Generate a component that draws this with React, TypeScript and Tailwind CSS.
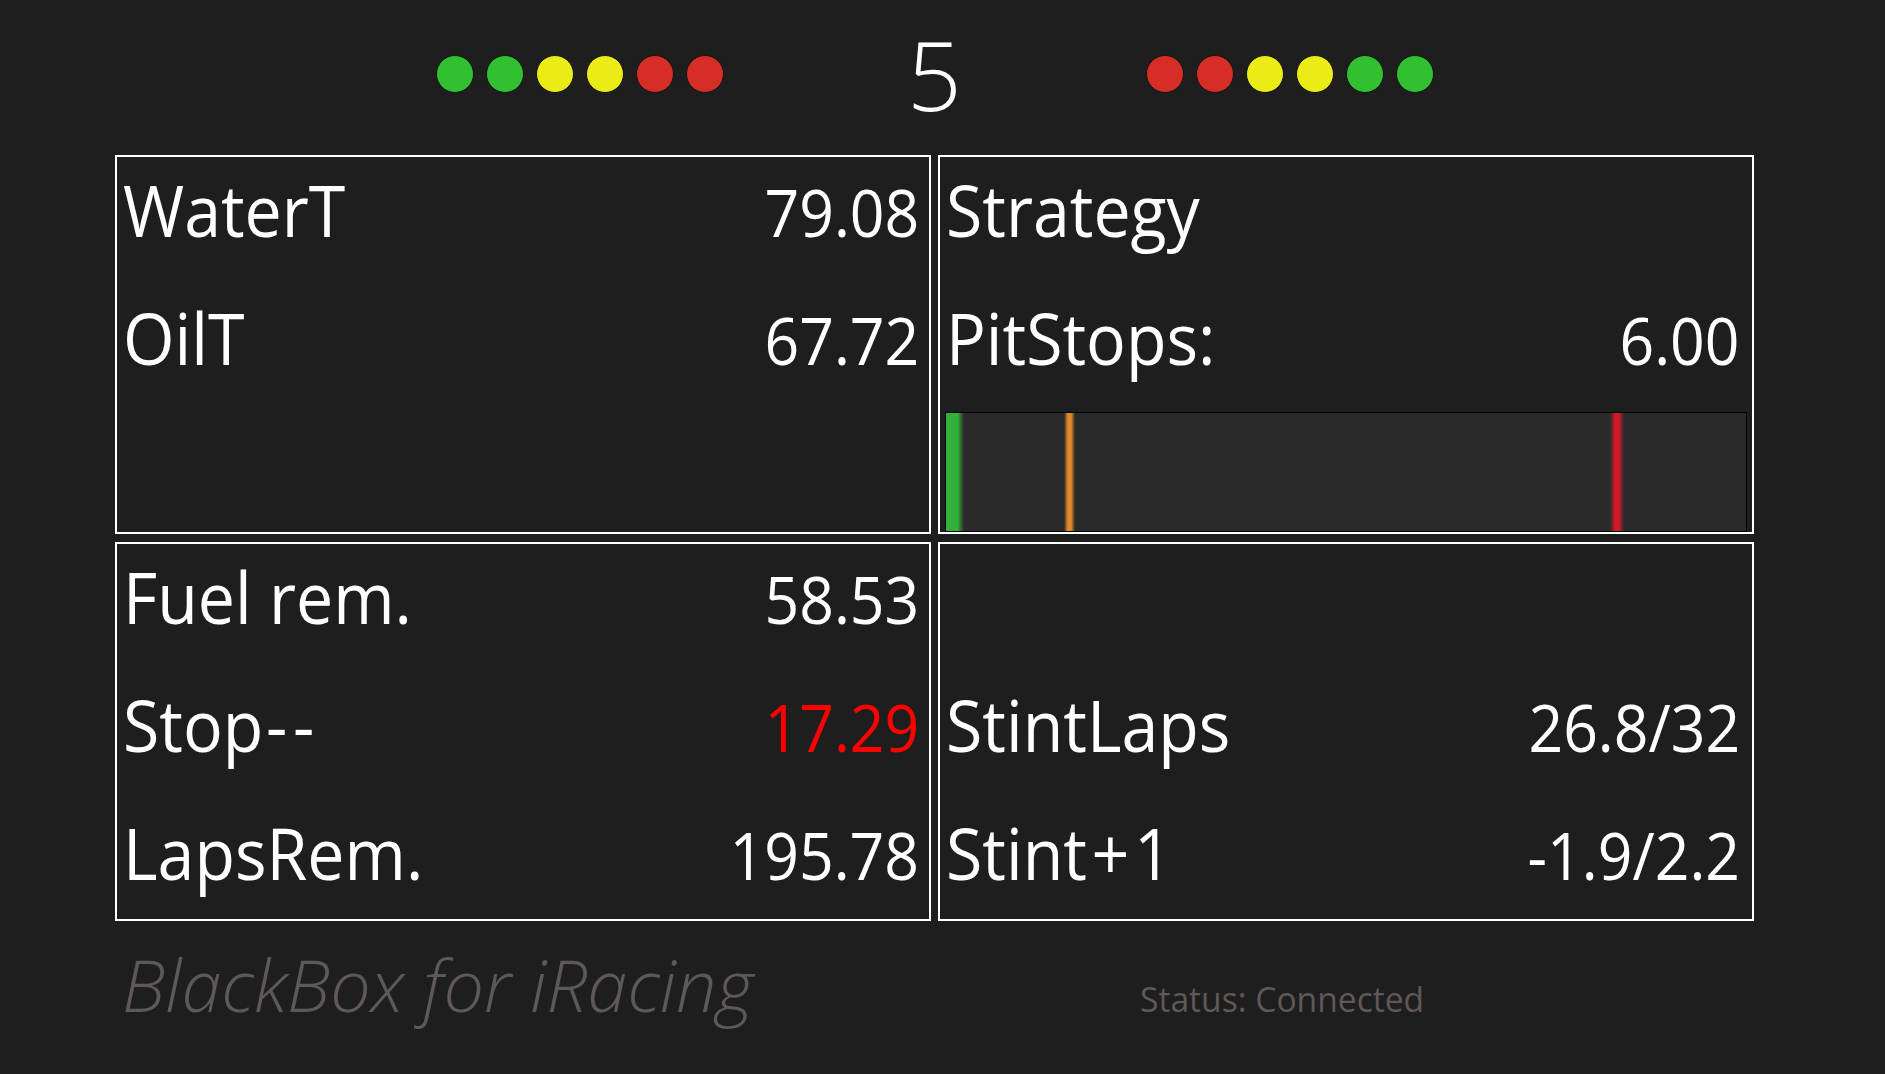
import React from "react";

const font = { fontFamily: '"Open Sans", "Noto Sans", "Liberation Sans", sans-serif' };

function Light({ color }: { color: "g" | "y" | "r" }) {
  const cls =
    color === "g"
      ? "bg-[#30c030]"
      : color === "y"
      ? "bg-[#ebeb17]"
      : "bg-[#d62d26]";
  return <div className={`h-[38px] w-[38px] rounded-full border border-[#141414] ${cls}`} />;
}

function Row({
  label,
  value,
  valueClass = "text-white",
  labelSize = "text-[72px]",
  pr = "pr-[10px]",
}: {
  label?: React.ReactNode;
  value?: string;
  valueClass?: string;
  labelSize?: string;
  pr?: string;
}) {
  return (
    <div className={`flex h-[104px] items-baseline justify-between pl-[6px] ${pr} leading-[104px]`}>
      <span className={`${labelSize} origin-left scale-x-[0.92] whitespace-nowrap text-white`}>
        {label ?? "\u00a0"}
      </span>
      <span className={`origin-right scale-x-[0.92] whitespace-nowrap text-[66px] ${valueClass}`}>
        {value ?? ""}
      </span>
    </div>
  );
}

function Panel({ children }: { children: React.ReactNode }) {
  return (
    <div className="flex h-[379px] flex-col gap-[24px] overflow-hidden border-2 border-white">
      {children}
    </div>
  );
}

export default function App() {
  return (
    <div className="min-h-[1074px] w-full bg-[#1e1e1e]" style={font}>
      <div className="ml-[115px] w-[1639px]">
        <div className="flex h-[155px] items-center justify-center pb-[7px]">
          <div className="flex gap-[12px]">
            <Light color="g" />
            <Light color="g" />
            <Light color="y" />
            <Light color="y" />
            <Light color="r" />
            <Light color="r" />
          </div>
          <div className="w-[422px] text-center text-[96px] font-light leading-[96px] text-white">5</div>
          <div className="flex gap-[12px]">
            <Light color="r" />
            <Light color="r" />
            <Light color="y" />
            <Light color="y" />
            <Light color="g" />
            <Light color="g" />
          </div>
        </div>

        <div className="grid grid-cols-2 gap-x-[7px] gap-y-[8px]">
          <Panel>
            <Row label="WaterT" value="79.08" />
            <Row label="OilT" value="67.72" />
          </Panel>
          <div className="flex h-[379px] flex-col overflow-hidden border-2 border-white">
            <div className="flex flex-col gap-[24px]">
              <Row label="Strategy" pr="pr-[12px]" />
              <Row label="PitStops:" value="6.00" pr="pr-[12px]" />
            </div>
            <div className="relative mx-[5px] mt-[23px] flex-1 border border-black bg-[#2a2a2a]">
              <div className="absolute inset-y-0 left-0 w-[18px] bg-[linear-gradient(to_right,#33b03a_0%,#33b03a_65%,rgba(51,176,58,0)_100%)]" />
              <div className="absolute inset-y-0 left-[14.8%] w-[11px] bg-[linear-gradient(to_right,rgba(224,138,42,0)_0%,#e08a2a_35%,#e08a2a_65%,rgba(224,138,42,0)_100%)]" />
              <div className="absolute inset-y-0 left-[83%] w-[14px] bg-[linear-gradient(to_right,rgba(208,26,42,0)_0%,#cf1a2b_35%,#cf1a2b_65%,rgba(208,26,42,0)_100%)]" />
            </div>
          </div>
          <Panel>
            <Row label="Fuel rem." value="58.53" />
            <Row
              label={
                <>
                  Stop<span className="pl-[3px] tracking-[6px]">--</span>
                </>
              }
              value="17.29"
              valueClass="text-[#ff0000]"
            />
            <Row label="LapsRem." value="195.78" />
          </Panel>
          <Panel>
            <Row pr="pr-[12px]" />
            <Row label="StintLaps" value="26.8/32" pr="pr-[12px]" />
            <Row
              label={
                <>
                  Stint<span className="px-[5px]">+</span>1
                </>
              }
              value="-1.9/2.2"
              pr="pr-[12px]"
            />
          </Panel>
        </div>

        <div className="mt-[27px] flex items-baseline">
          <div className="w-[1025px] pl-[7px] text-[72px] font-light italic leading-[72px] text-[#5f5858]">
            BlackBox for iRacing
          </div>
          <div className="origin-left scale-x-[0.96] whitespace-nowrap text-[35px] leading-[35px] text-[#5f5858]">
            Status: Connected
          </div>
        </div>
      </div>
    </div>
  );
}
